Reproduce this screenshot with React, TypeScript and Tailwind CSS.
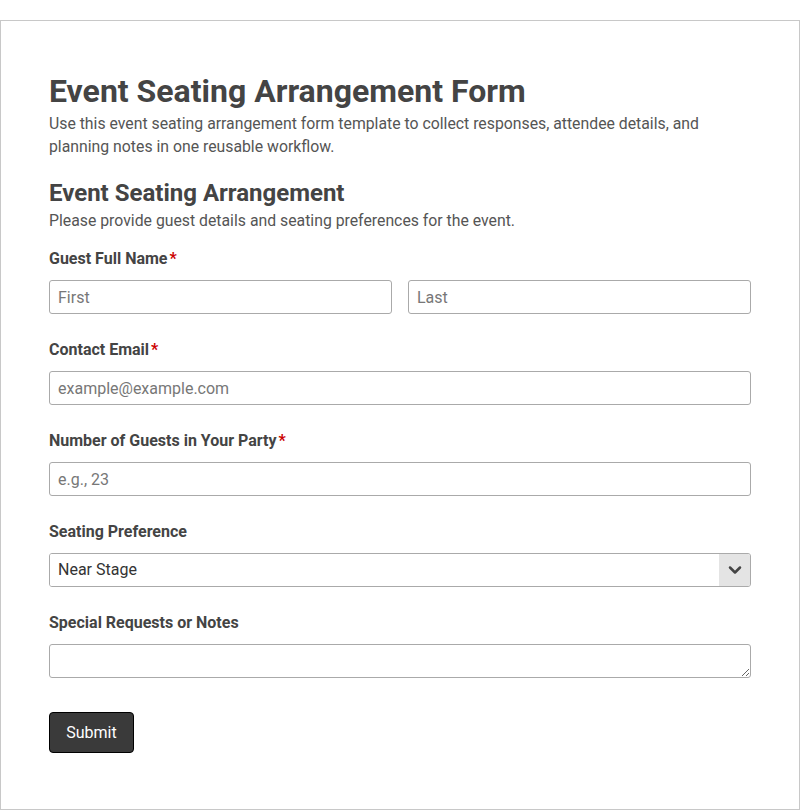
import { ChevronDown } from "lucide-react";

const labelCls = "block text-[16px] leading-[24px] font-bold text-[#444] mb-[9px]";
const inputCls =
  "w-full h-[34px] px-[8px] border border-[#aaa] rounded-[3px] text-[16px] text-[#444] placeholder:text-[#777] bg-white outline-none";

function Req() {
  return <span className="text-[#c00] ml-[2px]">*</span>;
}

export default function App() {
  return (
    <div className="bg-white pt-[20px] font-['Roboto',sans-serif]">
      <div className="border border-[#c8c8c8] px-[48px] pt-[52px] pb-[56px]">
        <h1 className="text-[32px] leading-[36px] font-bold text-[#444]">Event Seating Arrangement Form</h1>
        <p className="mt-[3px] text-[15.8px] leading-[23px] text-[#555]">
          Use this event seating arrangement form template to collect responses, attendee details, and planning notes in one reusable workflow.
        </p>

        <h2 className="mt-[20px] text-[24px] leading-[30px] font-bold text-[#444]">Event Seating Arrangement</h2>
        <p className="mt-[1px] text-[15.8px] leading-[23px] text-[#555]">
          Please provide guest details and seating preferences for the event.
        </p>

        <form className="mt-[15px] flex flex-col gap-[24px]" onSubmit={(e) => e.preventDefault()}>
          <div>
            <label className={labelCls}>
              Guest Full Name<Req />
            </label>
            <div className="grid grid-cols-2 gap-[16px]">
              <input className={inputCls} placeholder="First" />
              <input className={inputCls} placeholder="Last" />
            </div>
          </div>

          <div>
            <label className={labelCls}>
              Contact Email<Req />
            </label>
            <input className={inputCls} placeholder="example@example.com" />
          </div>

          <div>
            <label className={labelCls}>
              Number of Guests in Your Party<Req />
            </label>
            <input className={inputCls} placeholder="e.g., 23" />
          </div>

          <div>
            <label className={labelCls}>Seating Preference</label>
            <div className="relative flex h-[34px] border border-[#aaa] rounded-[3px] overflow-hidden">
              <select className="flex-1 appearance-none px-[8px] text-[16px] text-[#333] bg-white outline-none">
                <option>Near Stage</option>
                <option>Middle</option>
                <option>Back</option>
              </select>
              <div className="w-[31px] bg-[#e4e4e4] flex items-center justify-center pointer-events-none">
                <ChevronDown size={20} strokeWidth={3} className="text-[#444]" />
              </div>
            </div>
          </div>

          <div>
            <label className={labelCls}>Special Requests or Notes</label>
            <textarea className="block w-full h-[34px] px-[8px] py-[4px] border border-[#aaa] rounded-[3px] text-[16px] outline-none resize-y" />
          </div>

          <div className="mt-[10px]">
            <button
              type="submit"
              className="h-[41px] w-[85px] bg-[#3a3a3a] border border-black rounded-[4px] text-white text-[16px]"
            >
              Submit
            </button>
          </div>
        </form>
      </div>
    </div>
  );
}
